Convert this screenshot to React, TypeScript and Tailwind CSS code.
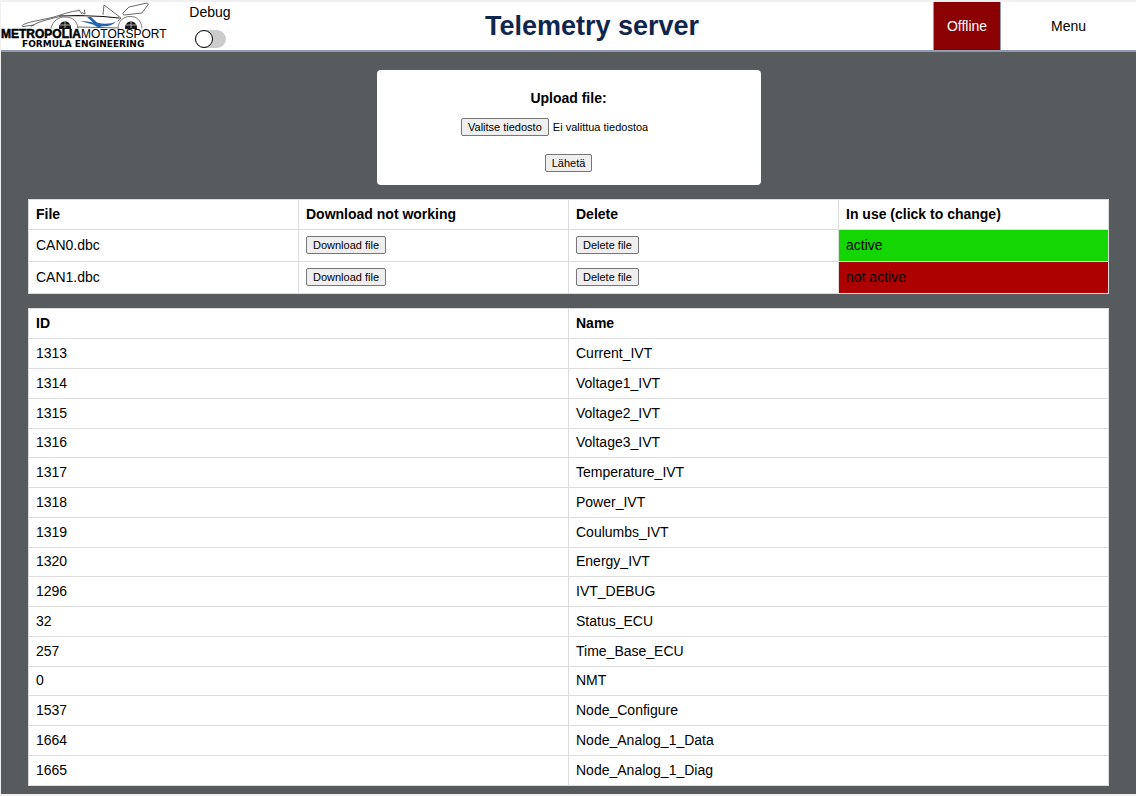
import { useState } from "react";
import type { ReactNode } from "react";

const messages: [number, string][] = [
  [1313, "Current_IVT"],
  [1314, "Voltage1_IVT"],
  [1315, "Voltage2_IVT"],
  [1316, "Voltage3_IVT"],
  [1317, "Temperature_IVT"],
  [1318, "Power_IVT"],
  [1319, "Coulumbs_IVT"],
  [1320, "Energy_IVT"],
  [1296, "IVT_DEBUG"],
  [32, "Status_ECU"],
  [257, "Time_Base_ECU"],
  [0, "NMT"],
  [1537, "Node_Configure"],
  [1664, "Node_Analog_1_Data"],
  [1665, "Node_Analog_1_Diag"],
];

const cell = "border border-[#dddddd] px-[7px] pt-0 pb-0.5 text-left";

function Logo() {
  return (
    <svg viewBox="1 2 168 48" className="h-12 w-[168px] shrink-0" role="img" aria-label="Metropolia Motorsport Formula Engineering">
      <g fill="none" stroke="#444" strokeWidth="0.8" strokeLinecap="round" strokeLinejoin="round">
        <path d="M23 26.500 C20 25.500 25 23.500 31 22 L52 17.500 C62 15 70 11 79 10.500" />
        <path d="M23 26.500 L34 25 M31 26.500 C37 22 46 20 60 16.500" />
        <path d="M60 16 L78 15.500 L103 16.500 L119 18" stroke="#111" strokeWidth="1.1" />
        <path d="M51 28 C53 21 58 17 65 17 C73 17 77 21 78 28" stroke="#555" />
        <path d="M79 10 L82 14 M82 12.500 L85 14 L84.500 10" />
        <path d="M103 14.500 L104 5 L108 8 L121 18 L118 21" />
        <path d="M123 13 L129 7 L147 3 L148.500 4 L142 13 L124 15 Z" />
        <path d="M118 27 C119 20 124 16.500 130 16.500 C137 16.500 141 20 142 28" stroke="#555" />
        <path d="M78 27 L119 28" />
      </g>
      <path d="M80 21 C85 21 90 22 93 22.500 L87 17 L91 17 L97 22.500 C104 24.500 111 24 116 21.500 C112 26 106 27 100 26 L104 28 L99 28 L93 24.500 Z" fill="#2264b0" />
      {[65, 131].map((x) => (
        <g key={x}>
          <path d={`M${x - 6} 29 C${x - 7} 19 ${x + 7} 19 ${x + 6} 29 Z`} fill="#151515" />
          <path d={`M${x} 22V28M${x - 5} 25H${x + 5}`} stroke="#bbb" strokeWidth="0.9" />
        </g>
      ))}
      <text x="1" y="38" fontSize="12" fontFamily="Liberation Sans, sans-serif" fill="#000">
        <tspan fontWeight="700" stroke="#000" strokeWidth="0.5">METROPOLIA</tspan>
        <tspan>MOTORSPORT</tspan>
      </text>
      <text x="22" y="47" fontSize="9" fontWeight="700" fontFamily="DejaVu Sans, sans-serif" fill="#000">
        FORMULA ENGINEERING
      </text>
    </svg>
  );
}

function SmallButton({ children, type = "button" }: { children: ReactNode; type?: "button" | "submit" }) {
  return (
    <button type={type} className="block h-[18px] rounded-[2px] border border-[#767676] bg-[#efefef] px-1.5 text-[11px] leading-4">
      {children}
    </button>
  );
}

export default function App() {
  const [active, setActive] = useState([true, false]);
  const [fileName, setFileName] = useState("");

  return (
    <div className="flex min-h-screen flex-col border-y-2 border-l border-[#f0f0f0] bg-[#575b5e] font-['Liberation_Sans',Arial,sans-serif] text-sm text-black">
      <header className="flex h-[50px] items-stretch border-b-2 border-[#8e9bb0] bg-white">
        <Logo />
        <label className="flex w-[82px] flex-col items-center gap-2">
          <span>Debug</span>
          <input
            type="checkbox"
            className="h-[18px] w-[31px] appearance-none rounded-full bg-[#cccccc] before:block before:size-[18px] before:rounded-full before:border before:border-black before:bg-white checked:bg-green-500 checked:before:ml-auto"
          />
        </label>
        <h1 className="flex flex-1 items-center justify-center text-[27px] font-bold text-[#10264d]">Telemetry server</h1>
        <div className="flex w-[68px] items-center justify-center border-x border-[#8e9bb0] bg-[#8b0000] text-white">Offline</div>
        <button type="button" className="w-[135px]">Menu</button>
      </header>

      <main className="flex flex-col px-[27px] pt-[18px] pb-2">
        <form className="mx-auto flex w-[384px] flex-col items-center rounded bg-white pt-5 pb-[13px]" onSubmit={(e) => e.preventDefault()}>
          <h2 className="leading-4 font-bold">Upload file:</h2>
          <label className="mt-3 flex w-[215px] items-center gap-1 text-[11px] leading-4">
            <input type="file" className="sr-only" onChange={(e) => setFileName(e.target.files?.[0]?.name ?? "")} />
            <span className="h-[18px] shrink-0 rounded-[2px] border border-[#767676] bg-[#efefef] px-1.5">Valitse tiedosto</span>
            <span className="truncate">{fileName || "Ei valittua tiedostoa"}</span>
          </label>
          <div className="mt-[18px]">
            <SmallButton type="submit">Lähetä</SmallButton>
          </div>
        </form>

        <table className="mt-3.5 w-full table-fixed border-collapse bg-white">
          <thead>
            <tr className="h-[30px]">
              <th className={cell}>File</th>
              <th className={cell}>Download not working</th>
              <th className={cell}>Delete</th>
              <th className={cell}>In use (click to change)</th>
            </tr>
          </thead>
          <tbody>
            {["CAN0.dbc", "CAN1.dbc"].map((file, i) => (
              <tr key={file} className="h-8">
                <td className={cell}>{file}</td>
                <td className={cell}><SmallButton>Download file</SmallButton></td>
                <td className={cell}><SmallButton>Delete file</SmallButton></td>
                <td className={active[i] ? "border border-[#dddddd] bg-[#14d602] pt-0 pb-0.5" : "border border-[#dddddd] bg-[#ad0000] pt-0 pb-0.5"}>
                  <button
                    type="button"
                    className="block w-full px-[7px] text-left"
                    onClick={() => setActive(active.map((on, n) => (n === i ? !on : on)))}
                  >
                    {active[i] ? "active" : "not active"}
                  </button>
                </td>
              </tr>
            ))}
          </tbody>
        </table>

        <table className="mt-3.5 w-full table-fixed border-collapse bg-white">
          <thead>
            <tr className="h-[30px]">
              <th className={cell}>ID</th>
              <th className={cell}>Name</th>
            </tr>
          </thead>
          <tbody>
            {messages.map(([id, name]) => (
              <tr key={id} className="h-[30px] nth-[4n]:h-[29px]">
                <td className={cell}>{id}</td>
                <td className={cell}>{name}</td>
              </tr>
            ))}
          </tbody>
        </table>
      </main>
    </div>
  );
}
